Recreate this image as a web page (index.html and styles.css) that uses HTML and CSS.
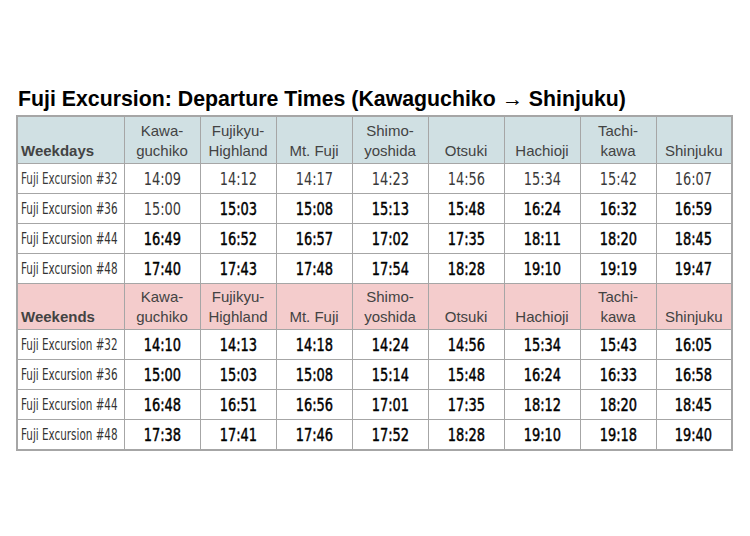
FILE: index.html
```html
<!DOCTYPE html>
<html>
<head>
<meta charset="utf-8">
<link rel="stylesheet" href="styles.css">
</head>
<body>
<div class="page">
  <h1 class="title">Fuji Excursion: Departure Times (Kawaguchiko → Shinjuku)</h1>
  <table class="timetable">
    <colgroup>
      <col class="c-label">
      <col class="c-st"><col class="c-st"><col class="c-st"><col class="c-st">
      <col class="c-st"><col class="c-st"><col class="c-st"><col class="c-st">
    </colgroup>
    <tr class="head weekdays">
      <th class="group">Weekdays</th>
      <th>Kawa-<br>guchiko</th><th>Fujikyu-<br>Highland</th><th>Mt. Fuji</th><th>Shimo-<br>yoshida</th>
      <th>Otsuki</th><th>Hachioji</th><th>Tachi-<br>kawa</th><th>Shinjuku</th>
    </tr>
    <tr class="row light">
      <td class="label"><span>Fuji Excursion #32</span></td>
      <td><span>14:09</span></td><td><span>14:12</span></td><td><span>14:17</span></td><td><span>14:23</span></td>
      <td><span>14:56</span></td><td><span>15:34</span></td><td><span>15:42</span></td><td><span>16:07</span></td>
    </tr>
    <tr class="row">
      <td class="label"><span>Fuji Excursion #36</span></td>
      <td class="light"><span>15:00</span></td><td><span>15:03</span></td><td><span>15:08</span></td><td><span>15:13</span></td>
      <td><span>15:48</span></td><td><span>16:24</span></td><td><span>16:32</span></td><td><span>16:59</span></td>
    </tr>
    <tr class="row">
      <td class="label"><span>Fuji Excursion #44</span></td>
      <td><span>16:49</span></td><td><span>16:52</span></td><td><span>16:57</span></td><td><span>17:02</span></td>
      <td><span>17:35</span></td><td><span>18:11</span></td><td><span>18:20</span></td><td><span>18:45</span></td>
    </tr>
    <tr class="row">
      <td class="label"><span>Fuji Excursion #48</span></td>
      <td><span>17:40</span></td><td><span>17:43</span></td><td><span>17:48</span></td><td><span>17:54</span></td>
      <td><span>18:28</span></td><td><span>19:10</span></td><td><span>19:19</span></td><td><span>19:47</span></td>
    </tr>
    <tr class="head weekends">
      <th class="group">Weekends</th>
      <th>Kawa-<br>guchiko</th><th>Fujikyu-<br>Highland</th><th>Mt. Fuji</th><th>Shimo-<br>yoshida</th>
      <th>Otsuki</th><th>Hachioji</th><th>Tachi-<br>kawa</th><th>Shinjuku</th>
    </tr>
    <tr class="row">
      <td class="label"><span>Fuji Excursion #32</span></td>
      <td><span>14:10</span></td><td><span>14:13</span></td><td><span>14:18</span></td><td><span>14:24</span></td>
      <td><span>14:56</span></td><td><span>15:34</span></td><td><span>15:43</span></td><td><span>16:05</span></td>
    </tr>
    <tr class="row">
      <td class="label"><span>Fuji Excursion #36</span></td>
      <td><span>15:00</span></td><td><span>15:03</span></td><td><span>15:08</span></td><td><span>15:14</span></td>
      <td><span>15:48</span></td><td><span>16:24</span></td><td><span>16:33</span></td><td><span>16:58</span></td>
    </tr>
    <tr class="row">
      <td class="label"><span>Fuji Excursion #44</span></td>
      <td><span>16:48</span></td><td><span>16:51</span></td><td><span>16:56</span></td><td><span>17:01</span></td>
      <td><span>17:35</span></td><td><span>18:12</span></td><td><span>18:20</span></td><td><span>18:45</span></td>
    </tr>
    <tr class="row">
      <td class="label"><span>Fuji Excursion #48</span></td>
      <td><span>17:38</span></td><td><span>17:41</span></td><td><span>17:46</span></td><td><span>17:52</span></td>
      <td><span>18:28</span></td><td><span>19:10</span></td><td><span>19:18</span></td><td><span>19:40</span></td>
    </tr>
  </table>
</div>
</body>
</html>
```

FILE: styles.css
```css
html, body {
  margin: 0;
  padding: 0;
  background: #ffffff;
}

.page {
  padding: 83px 0 0 16px;
}

.title {
  margin: 0 0 0 2px;
  height: 32px;
  font-family: "Liberation Sans", Arial, sans-serif;
  font-weight: bold;
  font-size: 21.3px;
  line-height: 32px;
  color: #000;
  white-space: nowrap;
}

.timetable {
  border-collapse: collapse;
  table-layout: fixed;
  width: 715px;
  border: 2px solid #a6a6a6;
}

.c-label { width: 107px; }
.c-st { width: 76px; }

.timetable th,
.timetable td {
  border: 1px solid #a6a6a6;
  padding: 0;
  overflow: hidden;
  white-space: nowrap;
}

.head th {
  height: 44px;
  font-family: "Liberation Sans", Arial, sans-serif;
  font-weight: normal;
  font-size: 15px;
  line-height: 20px;
  color: #434343;
  text-align: center;
  vertical-align: bottom;
  padding-bottom: 2px;
}

.weekends th {
  height: 43px;
}

.head th.group {
  font-weight: bold;
  text-align: left;
  padding-left: 3px;
}

.weekdays th { background: #d0e0e3; }
.weekends th { background: #f4cccc; }

.row td {
  height: 29px;
  text-align: center;
  vertical-align: middle;
  font-family: "DejaVu Sans Condensed", "DejaVu Sans", sans-serif;
  font-stretch: condensed;
  font-weight: normal;
  font-size: 18px;
  color: #000;
  -webkit-text-stroke: 0.45px #000;
}

.row td span {
  display: inline-block;
  transform: scaleX(0.8);
}

.row td.label {
  text-align: left;
  padding-left: 3px;
  font-weight: normal;
  font-size: 15px;
  color: #333;
  -webkit-text-stroke: 0;
}

.row td.label span {
  transform-origin: left center;
  transform: scaleX(0.77);
}

.row.light td,
.row td.light {
  color: #3a3a3a;
  -webkit-text-stroke: 0;
}
```
